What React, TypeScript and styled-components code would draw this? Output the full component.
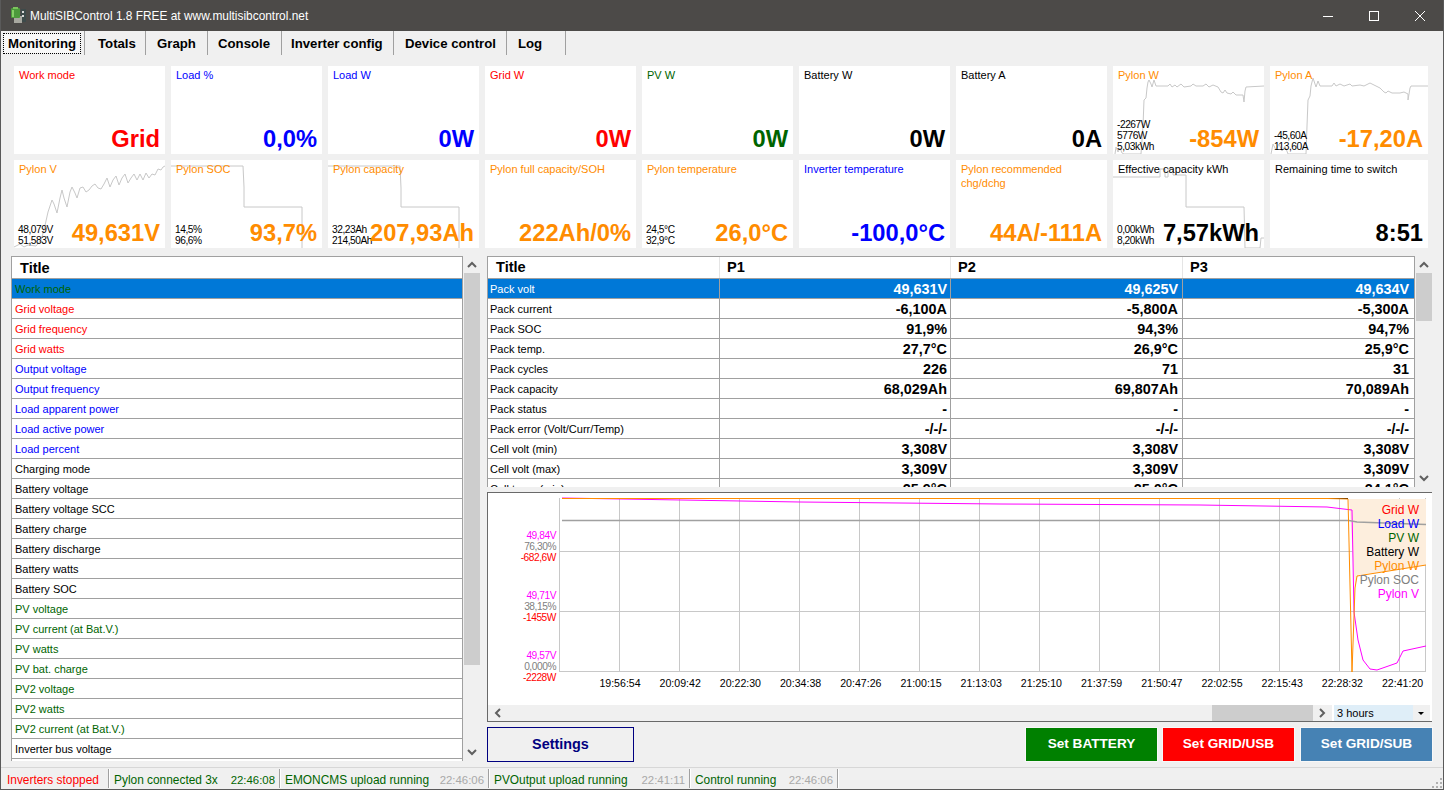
import React from 'react';
import styled, { createGlobalStyle } from 'styled-components';

const ORANGE = '#ff8c00';
const RED = '#ff0000';
const BLUE = '#0000ff';
const GREEN = '#006400';
const BLACK = '#000000';

const GlobalStyle = createGlobalStyle`
    html, body {
        margin: 0;
        padding: 0;
        overflow: hidden;
        background: #f0f0f0;
    }
    * {
        box-sizing: border-box;
    }
`;

const wattTrace =
    '2,88 3,81 5,86 7,82 9,87 11,88 28,88 30,60 31,34 33,32 34,22 35,16 36,14 38,18 39,21 41,14 43,20 55,20 57,18 59,21 62,19 64,21 68,18 71,21 78,20 80,18 83,20 90,20 93,18 96,21 100,19 105,21 108,26 110,27 112,24 114,27 118,28 120,26 123,29 130,29 131,36 132,25 133,21 151,20';
const ampTrace =
    '1,88 3,78 6,84 9,78 12,85 15,80 18,88 36,88 37,60 38,34 40,30 41,20 43,12 45,18 46,21 48,15 50,20 62,20 64,17 66,20 70,18 74,20 80,18 82,20 90,19 94,20 100,17 104,19 110,22 114,26 116,27 118,25 122,27 130,27 134,26 138,28 138,34 140,22 141,20 158,20';
const voltTrace =
    '0,87 6,84 10,87 14,85 22,86 27,80 30,70 34,52 38,40 40,44 43,53 46,38 48,30 50,38 53,47 56,32 58,27 61,33 63,38 66,28 69,27 72,32 75,30 78,26 81,24 84,28 87,29 90,24 93,18 96,27 99,20 102,16 105,25 108,18 111,14 114,23 117,18 120,14 123,20 126,14 129,20 132,13 135,18 138,14 141,15 144,9 147,10 149,7 151,6';
const socTrace = '0,6 72,6 73,27 73,47 131,47 131,88';
const capacityTrace = '0,6 72,6 73,28 73,47 131,47 131,88';
const effectiveTrace =
    '0,17 47,17 47,9 52,9 52,17 55,17 55,9 60,9 60,15 73,15 73,47 131,47 132,88 147,88 148,78 151,78';

interface CardData {
    title: string;
    value: string;
    color: string;
    scale?: string[];
    trace?: string;
}

const topCards: CardData[] = [
    { title: 'Work mode', value: 'Grid', color: RED },
    { title: 'Load %', value: '0,0%', color: BLUE },
    { title: 'Load W', value: '0W', color: BLUE },
    { title: 'Grid W', value: '0W', color: RED },
    { title: 'PV W', value: '0W', color: GREEN },
    { title: 'Battery W', value: '0W', color: BLACK },
    { title: 'Battery A', value: '0A', color: BLACK },
    { title: 'Pylon W', value: '-854W', color: ORANGE, scale: ['-2267W', '5776W', '5,03kWh'], trace: wattTrace },
    { title: 'Pylon A', value: '-17,20A', color: ORANGE, scale: ['-45,60A', '113,60A'], trace: ampTrace },
    { title: 'Pylon V', value: '49,631V', color: ORANGE, scale: ['48,079V', '51,583V'], trace: voltTrace },
    { title: 'Pylon SOC', value: '93,7%', color: ORANGE, scale: ['14,5%', '96,6%'], trace: socTrace },
    { title: 'Pylon capacity', value: '207,93Ah', color: ORANGE, scale: ['32,23Ah', '214,50Ah'], trace: capacityTrace },
    { title: 'Pylon full capacity/SOH', value: '222Ah/0%', color: ORANGE },
    { title: 'Pylon temperature', value: '26,0°C', color: ORANGE, scale: ['24,5°C', '32,9°C'] },
    { title: 'Inverter temperature', value: '-100,0°C', color: BLUE },
    { title: 'Pylon recommended chg/dchg', value: '44A/-111A', color: ORANGE },
    { title: 'Effective capacity kWh', value: '7,57kWh', color: BLACK, scale: ['0,00kWh', '8,20kWh'], trace: effectiveTrace },
    { title: 'Remaining time to switch', value: '8:51', color: BLACK },
];

const inverterRows: [string, string][] = [
    ['Work mode', GREEN],
    ['Grid voltage', RED],
    ['Grid frequency', RED],
    ['Grid watts', RED],
    ['Output voltage', BLUE],
    ['Output frequency', BLUE],
    ['Load apparent power', BLUE],
    ['Load active power', BLUE],
    ['Load percent', BLUE],
    ['Charging mode', BLACK],
    ['Battery voltage', BLACK],
    ['Battery voltage SCC', BLACK],
    ['Battery charge', BLACK],
    ['Battery discharge', BLACK],
    ['Battery watts', BLACK],
    ['Battery SOC', BLACK],
    ['PV voltage', GREEN],
    ['PV current (at Bat.V.)', GREEN],
    ['PV watts', GREEN],
    ['PV bat. charge', GREEN],
    ['PV2 voltage', GREEN],
    ['PV2 watts', GREEN],
    ['PV2 current (at Bat.V.)', GREEN],
    ['Inverter bus voltage', BLACK],
    ['', BLACK],
];

const packRows: string[][] = [
    ['Pack volt', '49,631V', '49,625V', '49,634V'],
    ['Pack current', '-6,100A', '-5,800A', '-5,300A'],
    ['Pack SOC', '91,9%', '94,3%', '94,7%'],
    ['Pack temp.', '27,7°C', '26,9°C', '25,9°C'],
    ['Pack cycles', '226', '71', '31'],
    ['Pack capacity', '68,029Ah', '69,807Ah', '70,089Ah'],
    ['Pack status', '-', '-', '-'],
    ['Pack error (Volt/Curr/Temp)', '-/-/-', '-/-/-', '-/-/-'],
    ['Cell volt (min)', '3,308V', '3,308V', '3,308V'],
    ['Cell volt (max)', '3,309V', '3,309V', '3,309V'],
    ['Cell temp (min)', '25,9°C', '25,0°C', '24,1°C'],
];

const timeLabels = [
    '19:56:54', '20:09:42', '20:22:30', '20:34:38', '20:47:26', '21:00:15', '21:13:03',
    '21:25:10', '21:37:59', '21:50:47', '22:02:55', '22:15:43', '22:28:32', '22:41:20',
];

const axisLabels = [
    { y: 539, text: '49,84V', color: '#ff00ff' },
    { y: 550, text: '76,30%', color: '#808080' },
    { y: 561, text: '-682,6W', color: RED },
    { y: 599, text: '49,71V', color: '#ff00ff' },
    { y: 610, text: '38,15%', color: '#808080' },
    { y: 621, text: '-1455W', color: RED },
    { y: 659, text: '49,57V', color: '#ff00ff' },
    { y: 670, text: '0,000%', color: '#808080' },
    { y: 681, text: '-2228W', color: RED },
];

const legend: [string, string][] = [
    ['Grid W', RED],
    ['Load W', BLUE],
    ['PV W', GREEN],
    ['Battery W', BLACK],
    ['Pylon W', ORANGE],
    ['Pylon SOC', '#808080'],
    ['Pylon V', '#ff00ff'],
];

const tabs = [
    { label: 'Monitoring', width: 81, inset: 0 },
    { label: 'Totals', width: 61, inset: 13 },
    { label: 'Graph', width: 62, inset: 11 },
    { label: 'Console', width: 74, inset: 10 },
    { label: 'Inverter config', width: 112, inset: 9 },
    { label: 'Device control', width: 113, inset: 11 },
    { label: 'Log', width: 59, inset: 11 },
];

const ChevronUp = () => (
    <svg width="10" height="7" viewBox="0 0 10 7">
        <path d="M1 6 L5 2 L9 6" fill="none" stroke="#606060" strokeWidth="2" />
    </svg>
);

const ChevronDown = () => (
    <svg width="10" height="7" viewBox="0 0 10 7">
        <path d="M1 1 L5 5 L9 1" fill="none" stroke="#606060" strokeWidth="2" />
    </svg>
);

const ChevronLeft = () => (
    <svg width="7" height="10" viewBox="0 0 7 10">
        <path d="M6 1 L2 5 L6 9" fill="none" stroke="#606060" strokeWidth="2" />
    </svg>
);

const ChevronRight = () => (
    <svg width="7" height="10" viewBox="0 0 7 10">
        <path d="M1 1 L5 5 L1 9" fill="none" stroke="#606060" strokeWidth="2" />
    </svg>
);

const AppIcon = () => (
    <svg width="17" height="17" viewBox="0 0 17 17">
        <rect x="11" y="2" width="5" height="13" fill="#3d4a4a" />
        <rect x="12" y="4" width="2" height="2" fill="#d8d8d8" />
        <rect x="12" y="8" width="2" height="2" fill="#d8d8d8" />
        <rect x="4" y="9" width="8" height="7" fill="#a8a8a0" />
        <rect x="1" y="1" width="9" height="10" rx="1" fill="#4c9a3c" />
        <rect x="3" y="0" width="5" height="2" fill="#7bc45c" />
        <rect x="2" y="3" width="2" height="7" fill="#86d068" />
    </svg>
);

const Chart: React.FC = () => (
    <ChartDrawing viewBox="488 493 943 212">
        {[551.5, 611.5].map(y => (
            <line key={y} x1="559" x2="1426" y1={y} y2={y} stroke="#c8c8c8" />
        ))}
        {Array.from({ length: 15 }, (_, i) => 559.5 + i * 60).map(x => (
            <line key={x} x1={x} x2={x} y1="498" y2="672" stroke="#c8c8c8" />
        ))}
        <line x1="1425.5" x2="1425.5" y1="498" y2="672" stroke="#c8c8c8" />
        <line x1="559" x2="1426" y1="671.5" y2="671.5" stroke="#c8c8c8" />
        <polygon points="1349,499 1426,499 1426,565 1395,570 1358,575 1355,588" fill="#fdeedd" />
        <polyline
            points="562,498 800,502 1000,504 1200,505 1327,507 1352,510 1354,612 1358,640 1363,660 1370,669 1377,670 1397,663 1403,651 1426,646"
            fill="none"
            stroke="#ff00ff"
        />
        <polyline points="562,520.5 1349,520.5 1357,522 1426,524.5" fill="none" stroke="#a0a0a0" strokeWidth="1.3" />
        <line x1="1328" x2="1348" y1="498.5" y2="498.5" stroke="#000000" />
        <polyline
            points="562,498.5 1328,498.5 1348,499 1348.5,520 1352,672 1355,588 1357,576 1395,570 1426,565"
            fill="none"
            stroke={ORANGE}
        />
        {axisLabels.map(label => (
            <ScaleText key={label.text} x="556" y={label.y} textAnchor="end" fill={label.color}>
                {label.text}
            </ScaleText>
        ))}
        {timeLabels.map((label, i) => (
            <TimeText key={label} x={620 + i * 60.2} y="687" textAnchor="middle" fill="#000000">
                {label}
            </TimeText>
        ))}
    </ChartDrawing>
);

const App: React.FC = () => (
    <Window>
        <GlobalStyle />
        <TitleBar>
            <TitleIcon>
                <AppIcon />
            </TitleIcon>
            <TitleText>MultiSIBControl 1.8 FREE at www.multisibcontrol.net</TitleText>
            <WindowButtons>
                <WindowButton>
                    <svg width="12" height="12" viewBox="0 0 12 12">
                        <line x1="1" x2="11" y1="6.5" y2="6.5" stroke="#fff" />
                    </svg>
                </WindowButton>
                <WindowButton>
                    <svg width="12" height="12" viewBox="0 0 12 12">
                        <rect x="1.5" y="1.5" width="9" height="9" fill="none" stroke="#fff" />
                    </svg>
                </WindowButton>
                <WindowButton>
                    <svg width="12" height="12" viewBox="0 0 12 12">
                        <path d="M1 1 L11 11 M11 1 L1 11" stroke="#fff" />
                    </svg>
                </WindowButton>
            </WindowButtons>
        </TitleBar>

        <TabStrip>
            {tabs.map((tab, i) => (
                <Tab key={tab.label} $width={tab.width} $inset={tab.inset}>
                    <TabLabel $active={i === 0}>{tab.label}</TabLabel>
                </Tab>
            ))}
        </TabStrip>

        <CardGrid>
            {topCards.map(card => (
                <Card key={card.title}>
                    {card.trace && (
                        <Spark viewBox="0 0 158 88" preserveAspectRatio="xMinYMin">
                            <polyline points={card.trace} fill="none" stroke="#c8c8c8" />
                        </Spark>
                    )}
                    <CardTitle $color={card.color}>{card.title}</CardTitle>
                    <CardFooter>
                        <ScaleBox>
                            {(card.scale || []).map(line => (
                                <div key={line}>{line}</div>
                            ))}
                        </ScaleBox>
                        <CardValue $color={card.color}>{card.value}</CardValue>
                    </CardFooter>
                </Card>
            ))}
        </CardGrid>

        <Panels>
            <ListColumn>
                <Table>
                    <HeaderRow>
                        <ListTitle>Title</ListTitle>
                    </HeaderRow>
                    {inverterRows.map(([name, color], i) => (
                        <ListRow key={name + i} $selected={i === 0} $color={color}>
                            {name}
                        </ListRow>
                    ))}
                </Table>
                <Scrollbar>
                    <ScrollArrow>
                        <ChevronUp />
                    </ScrollArrow>
                    <ScrollThumb $height={392} />
                    <ScrollSpacer />
                    <ScrollArrow>
                        <ChevronDown />
                    </ScrollArrow>
                </Scrollbar>
            </ListColumn>

            <DetailColumn>
                <PackArea>
                    <PackTable>
                        <PackHeader>
                            <PackHeadCell $first>Title</PackHeadCell>
                            <PackHeadCell>P1</PackHeadCell>
                            <PackHeadCell>P2</PackHeadCell>
                            <PackHeadCell>P3</PackHeadCell>
                        </PackHeader>
                        {packRows.map((row, i) => (
                            <PackRow key={row[0]} $selected={i === 0}>
                                <PackName>{row[0]}</PackName>
                                <PackValue>{row[1]}</PackValue>
                                <PackValue>{row[2]}</PackValue>
                                <PackValue>{row[3]}</PackValue>
                            </PackRow>
                        ))}
                    </PackTable>
                    <Scrollbar>
                        <ScrollArrow>
                            <ChevronUp />
                        </ScrollArrow>
                        <ScrollThumb $height={48} />
                        <ScrollSpacer />
                        <ScrollArrow>
                            <ChevronDown />
                        </ScrollArrow>
                    </Scrollbar>
                </PackArea>

                <ChartPanel>
                    <ChartBody>
                        <Chart />
                        <Legend>
                            {legend.map(([name, color]) => (
                                <LegendItem key={name} $color={color}>
                                    {name}
                                </LegendItem>
                            ))}
                        </Legend>
                    </ChartBody>
                    <ChartFooter>
                        <HScroll>
                            <ChevronLeft />
                            <HSpacer />
                            <HThumb />
                            <ChevronRight />
                        </HScroll>
                        <RangeSelect>
                            <RangeText>3 hours</RangeText>
                            <RangeCaret />
                        </RangeSelect>
                    </ChartFooter>
                </ChartPanel>

                <ButtonRow>
                    <SettingsButton>Settings</SettingsButton>
                    <ActionGroup>
                        <ActionButton $bg="#008000">Set BATTERY</ActionButton>
                        <ActionButton $bg="#ff0000">Set GRID/USB</ActionButton>
                        <ActionButton $bg="#4682b4">Set GRID/SUB</ActionButton>
                    </ActionGroup>
                </ButtonRow>
            </DetailColumn>
        </Panels>

        <StatusBar>
            <StatusItem $width={107}>
                <StatusText $color={RED}>Inverters stopped</StatusText>
            </StatusItem>
            <StatusItem $width={171}>
                <StatusText $color={GREEN}>Pylon connected 3x</StatusText>
                <StatusTime $color={GREEN}>22:46:08</StatusTime>
            </StatusItem>
            <StatusItem $width={209}>
                <StatusText $color={GREEN}>EMONCMS upload running</StatusText>
                <StatusTime $color="#a9a9a9">22:46:06</StatusTime>
            </StatusItem>
            <StatusItem $width={201}>
                <StatusText $color={GREEN}>PVOutput upload running</StatusText>
                <StatusTime $color="#a9a9a9">22:41:11</StatusTime>
            </StatusItem>
            <StatusItem $width={148}>
                <StatusText $color={GREEN}>Control running</StatusText>
                <StatusTime $color="#a9a9a9">22:46:06</StatusTime>
            </StatusItem>
            <Grip>
                <svg width="12" height="12" viewBox="0 0 12 12">
                    <path d="M9 1h2v2H9z M5 5h2v2H5z M9 5h2v2H9z M1 9h2v2H1z M5 9h2v2H5z M9 9h2v2H9z" fill="#b0b0b0" />
                </svg>
            </Grip>
        </StatusBar>
    </Window>
);

export default App;

const Window = styled.div`
    width: 1444px;
    height: 790px;
    display: flex;
    flex-direction: column;
    border: 1px solid #5a5a5a;
    border-top: 0;
    background: #f0f0f0;
    font-family: 'Liberation Sans', Arial, sans-serif;
    font-size: 11px;
    color: #000;
    overflow: hidden;
`;

const TitleBar = styled.div`
    height: 31px;
    flex: none;
    display: flex;
    align-items: center;
    background: #4c4a48;
    color: #fff;
    padding-left: 9px;
`;

const TitleIcon = styled.div`
    width: 20px;
    height: 17px;
`;

const TitleText = styled.div`
    flex: 1;
    font-size: 11.9px;
`;

const WindowButtons = styled.div`
    display: flex;
`;

const WindowButton = styled.div`
    width: 46px;
    height: 31px;
    display: flex;
    align-items: center;
    justify-content: center;
`;

const TabStrip = styled.div`
    height: 24px;
    flex: none;
    display: flex;
    padding-left: 3px;
`;

const Tab = styled.div<{ $width: number; $inset: number }>`
    width: ${p => p.$width}px;
    display: flex;
    align-items: center;
    padding-left: ${p => p.$inset}px;
    border-right: 1px solid #a0a0a0;
    font-size: 13.2px;
    font-weight: bold;
`;

const TabLabel = styled.span<{ $active?: boolean }>`
    padding: ${p => (p.$active ? '2px 4px' : '0')};
    outline: ${p => (p.$active ? '1px dotted #000' : 'none')};
    background: ${p => (p.$active ? '#f8f8f8' : 'transparent')};
`;

const CardGrid = styled.div`
    flex: none;
    display: grid;
    grid-template-columns: repeat(8, 151px) 158px;
    grid-auto-rows: 88px;
    gap: 6px;
    margin: 11px 0 0 13px;
`;

const Card = styled.div`
    position: relative;
    overflow: hidden;
    background: #fff;
    display: flex;
    flex-direction: column;
    justify-content: space-between;
    padding: 2px 5px 0 4px;
`;

const Spark = styled.svg`
    position: absolute;
    left: 0;
    top: 0;
    width: 158px;
    height: 88px;
`;

const CardTitle = styled.div<{ $color: string }>`
    position: relative;
    padding-left: 1px;
    color: ${p => p.$color};
    line-height: 14px;
    max-width: 135px;
`;

const CardFooter = styled.div`
    position: relative;
    display: flex;
    align-items: flex-end;
    justify-content: space-between;
`;

const ScaleBox = styled.div`
    width: 30px;
    flex: none;
    font-size: 10.2px;
    letter-spacing: -0.45px;
    line-height: 11px;
    white-space: nowrap;
    padding-bottom: 2px;
`;

const CardValue = styled.div<{ $color: string }>`
    color: ${p => p.$color};
    font-size: 23.7px;
    font-weight: bold;
    line-height: 30px;
    white-space: nowrap;
`;

const Panels = styled.div`
    flex: 1;
    min-height: 0;
    display: flex;
    gap: 7px;
    margin: 8px 11px 0 10px;
`;

const ListColumn = styled.div`
    width: 469px;
    height: 505px;
    flex: none;
    display: flex;
`;

const Table = styled.div`
    width: 453px;
    overflow: hidden;
    border: 1px solid #a0a0a0;
    border-bottom: 0;
    background: #fff;
`;

const HeaderRow = styled.div`
    height: 22px;
    display: flex;
    align-items: center;
    border-bottom: 1px solid #a0a0a0;
`;

const ListTitle = styled.div`
    padding-left: 8px;
    font-size: 14.6px;
    font-weight: bold;
`;

const ListRow = styled.div<{ $selected?: boolean; $color: string }>`
    height: 20px;
    line-height: 21px;
    padding-left: 3px;
    border-bottom: 1px solid #a0a0a0;
    color: ${p => p.$color};
    background: ${p => (p.$selected ? '#0078d7' : '#fff')};
`;

const Scrollbar = styled.div`
    width: 16px;
    flex: none;
    margin-left: 1px;
    display: flex;
    flex-direction: column;
    background: #f0f0f0;
`;

const ScrollArrow = styled.div`
    height: 17px;
    flex: none;
    display: flex;
    align-items: center;
    justify-content: center;
`;

const ScrollThumb = styled.div<{ $height: number }>`
    height: ${p => p.$height}px;
    flex: none;
    background: #cdcdcd;
`;

const ScrollSpacer = styled.div`
    flex: 1;
`;

const DetailColumn = styled.div`
    width: 945px;
    flex: none;
    display: flex;
    flex-direction: column;
    gap: 5px;
`;

const PackArea = styled.div`
    height: 231px;
    flex: none;
    display: flex;
`;

const PackTable = styled.div`
    width: 928px;
    overflow: hidden;
    border: 1px solid #a0a0a0;
    border-bottom: 0;
    background: #fff;
`;

const PackHeader = styled.div`
    height: 22px;
    display: grid;
    grid-template-columns: 232px 231px 232px 232px;
    border-bottom: 1px solid #a0a0a0;
`;

const PackHeadCell = styled.div<{ $first?: boolean }>`
    padding-left: ${p => (p.$first ? 8 : 7)}px;
    border-right: 1px solid #e5e5e5;
    font-size: 14.6px;
    font-weight: bold;
    line-height: 21px;
`;

const PackRow = styled.div<{ $selected?: boolean }>`
    height: 20px;
    display: grid;
    grid-template-columns: 232px 231px 232px 232px;
    border-bottom: 1px solid #a0a0a0;
    color: ${p => (p.$selected ? '#fff' : '#000')};
    background: ${p => (p.$selected ? '#0078d7' : '#fff')};
`;

const PackName = styled.div`
    padding-left: 2px;
    line-height: 21px;
    border-right: 1px solid #a0a0a0;
`;

const PackValue = styled.div`
    padding-right: 3px;
    text-align: right;
    font-size: 14.4px;
    font-weight: bold;
    line-height: 21px;
    border-right: 1px solid #a0a0a0;
    &:nth-child(3) {
        padding-right: 4px;
    }
    &:last-child {
        padding-right: 5px;
    }
`;

const ChartPanel = styled.div`
    height: 230px;
    flex: none;
    display: flex;
    flex-direction: column;
    border: 1px solid #696969;
    border-right: 0;
    background: #fff;
`;

const ChartBody = styled.div`
    position: relative;
    flex: 1;
    min-height: 0;
`;

const ChartDrawing = styled.svg`
    display: block;
    width: 943px;
    height: 212px;
`;

const ScaleText = styled.text`
    font-family: 'Liberation Sans', Arial, sans-serif;
    font-size: 10.2px;
    letter-spacing: -0.45px;
`;

const TimeText = styled.text`
    font-family: 'Liberation Sans', Arial, sans-serif;
    font-size: 10.6px;
`;

const Legend = styled.div`
    position: absolute;
    top: 10px;
    right: 13px;
    text-align: right;
`;

const LegendItem = styled.div<{ $color: string }>`
    color: ${p => p.$color};
    font-size: 12px;
    line-height: 14px;
`;

const ChartFooter = styled.div`
    height: 16px;
    flex: none;
    display: flex;
    background: #fff;
`;

const HScroll = styled.div`
    width: 844px;
    display: flex;
    align-items: center;
    padding: 0 6px;
    background: #f0f0f0;
`;

const HSpacer = styled.div`
    flex: 1;
`;

const HThumb = styled.div`
    width: 101px;
    height: 16px;
    margin-right: 6px;
    background: #cdcdcd;
`;

const RangeSelect = styled.div`
    flex: 1;
    display: flex;
    margin: 0 2px 0 2px;
    background: #f0f0f0;
`;

const RangeText = styled.div`
    width: 79px;
    padding-left: 3px;
    background: #dfeef8;
    font-size: 11px;
    line-height: 17px;
`;

const RangeCaret = styled.div`
    flex: 1;
    position: relative;
    &::after {
        content: '';
        position: absolute;
        left: 5px;
        top: 7px;
        border: 3px solid transparent;
        border-top: 3px solid #000;
    }
`;

const ButtonRow = styled.div`
    height: 35px;
    flex: none;
    display: flex;
    justify-content: space-between;
`;

const SettingsButton = styled.div`
    width: 147px;
    display: flex;
    align-items: center;
    justify-content: center;
    padding-bottom: 2px;
    border: 1px solid #000080;
    color: #000080;
    font-size: 14.4px;
    font-weight: bold;
`;

const ActionGroup = styled.div`
    display: flex;
    gap: 5px;
    margin-right: -1px;
`;

const ActionButton = styled.div<{ $bg: string }>`
    width: 133px;
    display: flex;
    align-items: center;
    justify-content: center;
    padding-bottom: 2px;
    border: 1px solid #f8f8f8;
    background: ${p => p.$bg};
    color: #fff;
    font-size: 13.6px;
    font-weight: bold;
    &:first-child {
        margin-right: -1px;
    }
`;

const StatusBar = styled.div`
    height: 22px;
    flex: none;
    display: flex;
    align-items: center;
    padding-left: 1px;
    border-top: 1px solid #d7d7d7;
`;

const StatusItem = styled.div<{ $width: number }>`
    width: ${p => p.$width}px;
    height: 19px;
    flex: none;
    display: flex;
    align-items: center;
    justify-content: space-between;
    padding: 2px 4px 0 5px;
    border-right: 1px solid #a0a0a0;
    box-shadow: 1px 0 0 #fff;
`;

const StatusText = styled.span<{ $color: string }>`
    color: ${p => p.$color};
    font-size: 11.9px;
    white-space: nowrap;
`;

const StatusTime = styled(StatusText)`
    font-size: 11.4px;
`;

const Grip = styled.div`
    flex: 1;
    display: flex;
    justify-content: flex-end;
    align-self: flex-end;
`;
